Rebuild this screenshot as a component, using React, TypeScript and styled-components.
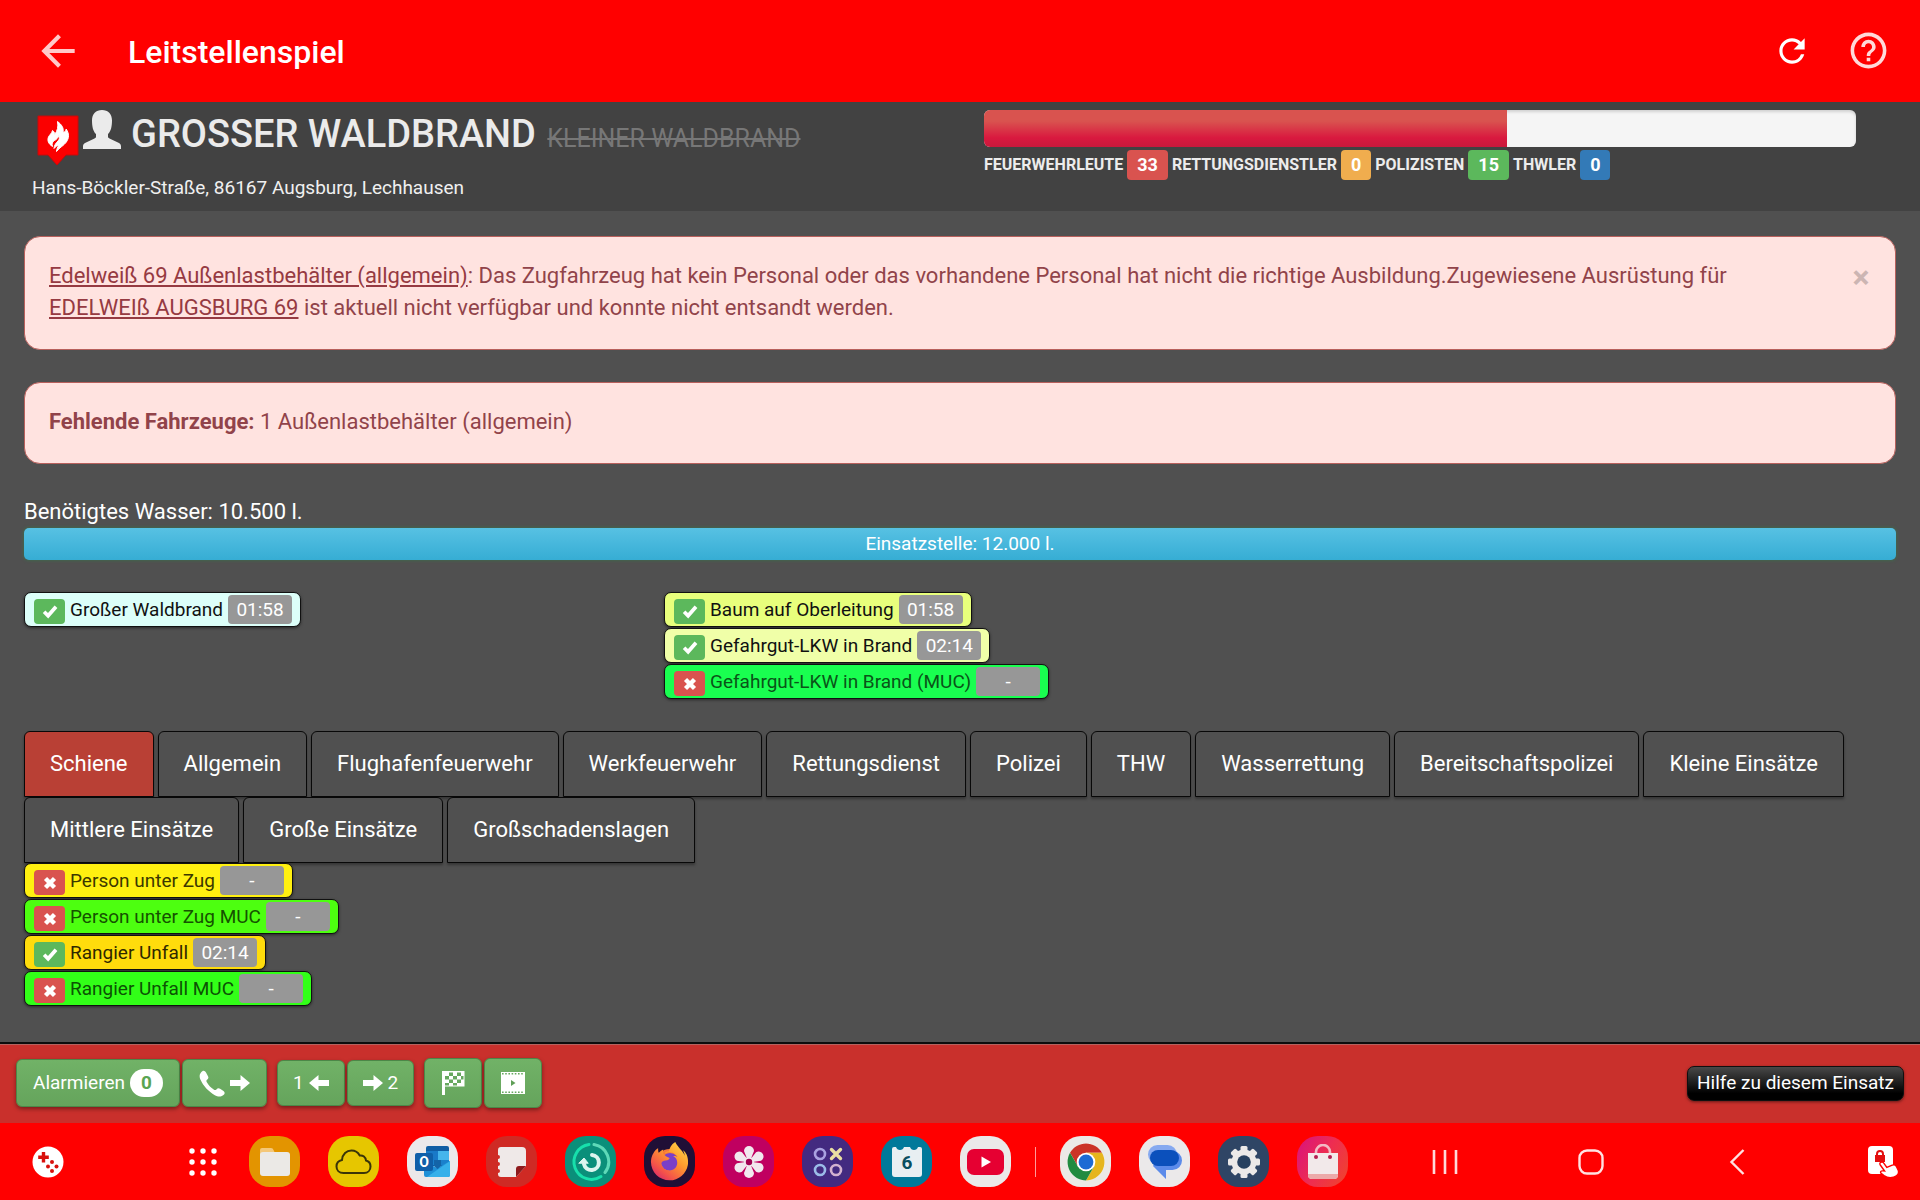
import React, { useState } from "react";
import styled, { createGlobalStyle } from "styled-components";
import { FaFirefoxBrowser } from "react-icons/fa";
import { MdArrowBack, MdHelpOutline, MdRefresh } from "react-icons/md";

const GlobalStyle = createGlobalStyle`
  *, *::before, *::after { box-sizing: border-box; }
  body {
    margin: 0;
    background: #505050;
    color: #fff;
    font-family: Roboto, "Liberation Sans", sans-serif;
    font-size: 22px;
    line-height: 32px;
  }
  button { font-family: inherit; cursor: pointer; }
  svg { display: block; flex: none; }
`;

const Page = styled.div`
  display: flex;
  flex-direction: column;
  min-height: 100vh;
`;

/* ---------- app bar ---------- */

const AppBar = styled.header`
  display: flex;
  align-items: center;
  height: 102px;
  padding: 0 28px 1px 34px;
  background: #ff0000;
`;

const AppTitle = styled.div`
  flex: 1;
  margin-left: 46px;
  padding-top: 3px;
  font-size: 32px;
  font-weight: 500;
  line-height: 40px;
`;

const BarButton = styled.button<{ $color?: string }>`
  display: flex;
  align-items: center;
  justify-content: center;
  width: 48px;
  height: 48px;
  padding: 0;
  border: 0;
  background: none;
  color: ${(p) => p.$color ?? "#fff"};
`;

const BarActions = styled.div`
  display: flex;
  gap: 28px;
`;

/* ---------- mission header ---------- */

const MissionHeader = styled.section`
  display: grid;
  grid-template-columns: 1fr 1fr;
  padding: 8px 0 11px;
  background: #424242;
`;

const MissionInfo = styled.div`
  padding-left: 32px;
`;

const TitleRow = styled.div`
  display: flex;
  align-items: flex-start;
  padding-left: 5px;
`;

const PinIcon = styled.svg`
  margin: 5px 4px 0 0;
`;

const MissionTitle = styled.h1`
  margin: 0 0 0 10px;
  color: #ebebeb;
  font-size: 38px;
  font-weight: 500;
  line-height: 48px;
  text-transform: uppercase;
  white-space: nowrap;
`;

const FormerTitle = styled.s`
  margin-left: 2px;
  color: #777;
  font-size: 25px;
  font-weight: 400;
  line-height: 24px;
`;

const Address = styled.address`
  margin-top: 9px;
  color: #f0f0f0;
  font-size: 19px;
  font-style: normal;
  line-height: 24px;
`;

const MissionStatus = styled.div`
  padding: 0 64px 0 24px;
`;

const Progress = styled.div`
  height: 37px;
  overflow: hidden;
  border-radius: 6px;
  background: #f5f5f5;
  box-shadow: inset 0 2px 3px rgba(0, 0, 0, 0.15);
`;

const ProgressFill = styled.div`
  height: 100%;
  background: linear-gradient(#d9534f 30%, #d9193f 75%, #c9193c);
`;

const CrewList = styled.div`
  display: flex;
  flex-wrap: wrap;
  align-items: center;
  gap: 4px;
  margin-top: 3px;
  font-size: 16px;
  font-weight: 700;
  line-height: 30px;
  color: #ececec;
`;

const CrewBadge = styled.span<{ $bg: string }>`
  padding: 0 10px;
  border-radius: 4px;
  background: ${(p) => p.$bg};
  color: #fff;
  font-size: 18px;
`;

/* ---------- content ---------- */

const Content = styled.main`
  display: flex;
  flex: 1;
  flex-direction: column;
  padding: 25px 24px 32px;
`;

const Alert = styled.div`
  display: flex;
  align-items: flex-start;
  margin-bottom: 32px;
  padding: 23px 24px 25px;
  border: 1px solid #b8605c;
  border-radius: 16px;
  background: #ffe3e0;
  color: #91434a;
`;

const AlertText = styled.p`
  flex: 1;
  margin: 0;
  padding-right: 80px;
`;

const AlertLink = styled.a`
  color: #963a42;
  text-decoration: underline;
`;

const CloseButton = styled.button`
  width: 22px;
  margin-right: -1px;
  padding: 1px 0 0;
  border: 0;
  background: none;
  color: #ccb5b3;
  font-size: 32px;
  font-weight: 700;
  line-height: 32px;
`;

const WaterBar = styled.div`
  height: 32px;
  margin-bottom: 32px;
  border-radius: 5px;
  background: linear-gradient(#57c1e3, #36add4);
  box-shadow: 0 0 3px 1px #41664c;
  font-size: 19px;
  line-height: 31px;
  text-align: center;
`;

const AaoColumns = styled.div`
  display: grid;
  grid-template-columns: repeat(3, 1fr);
  column-gap: 48px;
  margin-bottom: 32px;
`;

const AaoList = styled.div`
  display: flex;
  flex-direction: column;
  align-items: flex-start;
  gap: 1px;
`;

const AaoButton = styled.button<{ $bg: string; $fg: string }>`
  display: flex;
  align-items: center;
  gap: 5px;
  height: 35px;
  padding: 0 8px 0 9px;
  border: 1px solid #111;
  border-radius: 7px;
  background: ${(p) => p.$bg};
  box-shadow: 0 1px 3px rgba(0, 0, 0, 0.5);
  color: ${(p) => p.$fg};
  font-size: 19px;
  line-height: 29px;
  white-space: nowrap;
`;

const StateBadge = styled.span<{ $ok: boolean }>`
  display: flex;
  align-items: center;
  justify-content: center;
  align-self: flex-end;
  width: 31px;
  height: 25px;
  margin-bottom: 2px;
  border-radius: 4px;
  background: ${(p) => (p.$ok ? "#5cb85c" : "#d9534f")};
`;

const TimeBadge = styled.span`
  width: 64px;
  border-radius: 4px;
  background: #979797;
  color: #fff;
  text-align: center;
`;

const Tabs = styled.div`
  display: flex;
  flex-wrap: wrap;
  column-gap: 4px;
`;

const Tab = styled.button<{ $active: boolean }>`
  padding: 16px 25px;
  border: 1px solid #080808;
  border-radius: 6px 6px 0 0;
  background: ${(p) => (p.$active ? "#b94035" : "#505050")};
  box-shadow: 0 2px 3px rgba(0, 0, 0, 0.35);
  color: #fff;
  font-size: 22px;
  line-height: 32px;
`;

/* ---------- action bar ---------- */

const ActionBar = styled.footer`
  display: flex;
  align-items: center;
  justify-content: space-between;
  height: 81px;
  padding: 0 16px 1px;
  border-top: 2px solid #0c0c0c;
  background: #c9302c;
  box-shadow: inset 0 1px 0 #b3635f;
`;

const ActionGroups = styled.div`
  display: flex;
  align-items: center;
  gap: 10px;
`;

const ActionGroup = styled.div`
  display: flex;
  align-items: center;
  gap: 2px;
`;

const buttonHeights = { low: 46, normal: 48, tall: 50 };

const ActionButton = styled.button<{ $size?: keyof typeof buttonHeights }>`
  display: flex;
  align-items: center;
  justify-content: center;
  gap: 5px;
  height: ${(p) => buttonHeights[p.$size ?? "normal"]}px;
  padding: 0 ${(p) => (p.$size === "low" ? 15 : 16)}px;
  border: 1px solid #4c8748;
  border-radius: 6px;
  background: linear-gradient(#71b267, #65a45c);
  box-shadow: 0 2px 4px rgba(0, 0, 0, 0.4);
  color: #fff;
  font-size: 19px;
  line-height: 24px;
`;

const CountBadge = styled.span`
  padding: 0 11px;
  border-radius: 14px;
  background: #fff;
  color: #5aa552;
  font-weight: 700;
  line-height: 28px;
`;

const HelpButton = styled.button`
  padding: 0 9px 1px;
  border: 1px solid #101010;
  border-radius: 7px;
  background: linear-gradient(#484848, #000 80%);
  box-shadow: 0 1px 3px rgba(0, 0, 0, 0.5);
  color: #fff;
  font-size: 19px;
  line-height: 32px;
`;

/* ---------- system task bar ---------- */

const TaskBar = styled.nav`
  display: flex;
  align-items: center;
  justify-content: space-between;
  height: 77px;
  padding: 0 21px 0 32px;
  background: #ff0000;
`;

const AppDock = styled.div`
  display: flex;
  align-items: center;
  gap: 28px;
  margin-left: 32px;
`;

const DockDivider = styled.span`
  width: 1px;
  height: 30px;
  margin: 0 -4px;
  background: #ff9a9a;
`;

const PlainButton = styled.button`
  display: flex;
  align-items: center;
  justify-content: center;
  min-width: 32px;
  padding: 0;
  border: 0;
  background: none;
`;

const DrawerButton = styled(PlainButton)`
  min-width: 51px;
  margin-right: -7px;
`;

const AppIcon = styled.button<{ $bg: string }>`
  display: flex;
  align-items: center;
  justify-content: center;
  width: 51px;
  height: 51px;
  padding: 0;
  border: 0;
  border-radius: 21px;
  background: ${(p) => p.$bg};
`;

const SystemKeys = styled.div`
  display: flex;
  align-items: center;
  gap: 114px;
`;

const FirefoxMark = styled.span`
  display: grid;
  place-items: center;
  > * { grid-area: 1 / 1; }
  .flame { fill: url(#firefoxFlame); }
`;

const ArrowIcon = ({ left = false }: { left?: boolean }) => (
  <svg width="20" height="18" viewBox="0 0 20 18" aria-hidden="true">
    <path
      d={left ? "M0 9 9.500 1v5H20v6H9.500v5z" : "M20 9 10.500 1v5H0v6h10.500v5z"}
      fill="#fff"
    />
  </svg>
);

const CheckIcon = () => (
  <svg width="16" height="14" viewBox="0 0 16 14" aria-hidden="true">
    <path d="M.8 8 3.400 5.400 6 8 12.600.6 15.400 3 6.200 13.400z" fill="#fff" />
  </svg>
);

const CrossIcon = () => (
  <svg width="14" height="14" viewBox="0 0 14 14" aria-hidden="true">
    <path d="m2.500 2.500 9 9M11.500 2.500l-9 9" stroke="#fff" strokeWidth="4.400" />
  </svg>
);

const FlagIcon = () => (
  <svg width="24" height="26" viewBox="0 0 24 26" aria-hidden="true">
    <path d="M1 1h22.500v15.500H4V25H1z" fill="#fff" />
    <path
      d="M8 2.500h4V6H8zM16 2.500h4V6h-4zM4 6h4v3.500H4zM12 6h4v3.500h-4zM20 6h2.500v3.500H20zM8 9.500h4V13H8zM16 9.500h4V13h-4zM4 13h4v2.500H4zM12 13h4v2.500h-4z"
      fill="#67a85f"
    />
  </svg>
);

const FilmIcon = () => (
  <svg width="24" height="22" viewBox="0 0 24 22" aria-hidden="true">
    <path d="M0 0h24v22H0z" fill="#fff" />
    <path d="M1 1.800h22M1 20.200h22" stroke="#67a85f" strokeWidth="1.400" strokeDasharray="1.600 1.600" />
    <path d="m10 8 4.500 3-4.500 3z" fill="#5f9f57" />
  </svg>
);

const PhoneIcon = () => (
  <svg width="26" height="27" viewBox="0 0 26 27" aria-hidden="true">
    <path
      d="M2 2.500C4-.2 5.800.6 7 2.600l2 3.600c.8 1.500.3 2.500-1 3.600-.9.800-.7 1.600 0 2.800 1.600 2.800 4 5.300 6.700 7 1.100.7 1.900.7 2.700-.2 1.100-1.200 2.300-1.500 3.700-.6l3.400 2.200c1.600 1.200 1.600 2.700-.4 4.300-2.500 2-5.600 1.400-8.300-.1C9.600 21.700 4.200 16 1.400 9.600.4 7 .2 4.800 2 2.500z"
      fill="#fff"
    />
  </svg>
);

type Aao = { name: string; time?: string; bg: string; fg?: string };

const AaoItem = ({ name, time, bg, fg = "#111" }: Aao) => (
  <AaoButton type="button" $bg={bg} $fg={fg}>
    <StateBadge $ok={Boolean(time)}>{time ? <CheckIcon /> : <CrossIcon />}</StateBadge>
    <span>{name}</span>
    <TimeBadge>{time ?? "-"}</TimeBadge>
  </AaoButton>
);

const missionAaos: Aao[][] = [
  [{ name: "Großer Waldbrand", time: "01:58", bg: "#dcfff9" }],
  [
    { name: "Baum auf Oberleitung", time: "01:58", bg: "#e8ff7c" },
    { name: "Gefahrgut-LKW in Brand", time: "02:14", bg: "#f0ffa8" },
    { name: "Gefahrgut-LKW in Brand (MUC)", bg: "#19ff50", fg: "#0a5418" },
  ],
];

const railAaos: Aao[] = [
  { name: "Person unter Zug", bg: "#fff010", fg: "#3b3800" },
  { name: "Person unter Zug MUC", bg: "#4dff10", fg: "#155200" },
  { name: "Rangier Unfall", time: "02:14", bg: "#ffdc0c", fg: "#2e2800" },
  { name: "Rangier Unfall MUC", bg: "#32ff18", fg: "#0c5204" },
];

const tabNames = [
  "Schiene",
  "Allgemein",
  "Flughafenfeuerwehr",
  "Werkfeuerwehr",
  "Rettungsdienst",
  "Polizei",
  "THW",
  "Wasserrettung",
  "Bereitschaftspolizei",
  "Kleine Einsätze",
  "Mittlere Einsätze",
  "Große Einsätze",
  "Großschadenslagen",
];

const crew = [
  { label: "FEUERWEHRLEUTE", count: 33, bg: "#d9534f" },
  { label: "RETTUNGSDIENSTLER", count: 0, bg: "#f0ad4e" },
  { label: "POLIZISTEN", count: 15, bg: "#5cb85c" },
  { label: "THWLER", count: 0, bg: "#337ab7" },
];

const Dock = () => (
  <AppDock>
    <DrawerButton aria-label="Alle Apps">
      <svg width="28" height="28" viewBox="0 0 28 28" fill="#fff">
        {[3, 14, 25].map((y) => [3, 14, 25].map((x) => <circle key={`${x}-${y}`} cx={x} cy={y} r="2.700" />))}
      </svg>
    </DrawerButton>
    <AppIcon $bg="#e39400" aria-label="Eigene Dateien">
      <svg width="32" height="30" viewBox="0 0 32 30">
        <path d="M1 3a2 2 0 0 1 2-2h9q2 0 2.500 2L16 6v6H1z" fill="#f4c778" />
        <rect x="1" y="5" width="30" height="24" rx="3" fill="#ebe9e6" />
      </svg>
    </AppIcon>
    <AppIcon $bg="#e6c600" aria-label="Cloud">
      <svg width="37" height="26" viewBox="0 0 37 26">
        <path
          d="M8.500 24C4 24 1.500 21 1.500 17.500c0-3.800 2.600-6 5.500-6.500C7.500 5 11.500 1.500 16.500 1.500c4.200 0 6.600 2 8.200 5 3.200-.5 6 1.500 6.300 5 2.600.6 4.500 2.700 4.500 6 0 3.700-2.500 6.500-6.500 6.500z"
          fill="none"
          stroke="#3a3508"
          strokeWidth="2"
        />
      </svg>
    </AppIcon>
    <AppIcon $bg="#ebe8ea" aria-label="Outlook">
      <svg width="36" height="32" viewBox="0 0 36 32">
        <rect x="11" y="0" width="23" height="20" rx="2" fill="#0f5da4" />
        <path d="M11 5h12v9H11z" fill="#1979c8" />
        <path d="M23 5h11v9H23z" fill="#45b5ec" />
        <path d="M10 14h24v5H10z" fill="#1a80cc" />
        <path d="M9 15 22 22l13-7v14a2 2 0 0 1-2 2H11a2 2 0 0 1-2-2z" fill="#1f90d8" />
        <path d="M35 15v14a2 2 0 0 1-2 2H12z" fill="#36b0ea" />
        <path d="M19 14h7v6l-3.500 3-3.500-3z" fill="#1364a8" />
        <rect x="0" y="7" width="18" height="18" rx="2" fill="#0f5fa9" />
        <text x="9" y="21" fill="#fff" fontFamily="Roboto, sans-serif" fontSize="14" fontWeight="700" textAnchor="middle">O</text>
      </svg>
    </AppIcon>
    <AppIcon $bg="#cf2a24" aria-label="Notes">
      <svg width="30" height="32" viewBox="0 0 30 30">
        <path d="M4 0h21a4 4 0 0 1 4 4v15L19 30H4q-3 0-3-3v-1a2 2 0 0 0 0-4v-3a2 2 0 0 0 0-4v-3a2 2 0 0 0 0-4V3q0-3 3-3z" fill="#efe9e8" />
        <path d="M19 30v-8a3 3 0 0 1 3-3h7z" fill="#8e1a1c" />
      </svg>
    </AppIcon>
    <AppIcon $bg="#0b8f7a" aria-label="Smart Switch">
      <svg width="42" height="42" viewBox="0 0 42 42" fill="none" strokeLinecap="round">
        <path d="M19 3.500A17.500 17.500 0 1 0 31 35.500" stroke="#17e0ac" strokeWidth="3" />
        <path d="M24 3.500a17.500 17.500 0 0 1 11 28" stroke="#5ed9b8" strokeWidth="3" />
        <path d="M22 14a7.500 7.500 0 1 1-8 9" stroke="#dcf5ee" strokeWidth="4" />
        <path d="m9 22 5-5 4 5z" fill="#dcf5ee" stroke="#dcf5ee" strokeWidth="1" />
      </svg>
    </AppIcon>
    <AppIcon $bg="#200f36" aria-label="Firefox">
      <FirefoxMark>
        <svg width="40" height="40" viewBox="0 0 40 40">
          <defs>
            <linearGradient id="firefoxFlame" x1="1" y1="0" x2="0.200" y2="1">
              <stop offset="0" stopColor="#ffe04a" />
              <stop offset=".45" stopColor="#ff9a2e" />
              <stop offset=".8" stopColor="#f4524a" />
              <stop offset="1" stopColor="#d92a6a" />
            </linearGradient>
          </defs>
          <circle cx="20" cy="22" r="15" fill="#f77a35" />
          <circle cx="20" cy="20" r="9" fill="#7a3fc8" />
        </svg>
        <FaFirefoxBrowser className="flame" size={39} />
      </FirefoxMark>
    </AppIcon>
    <AppIcon $bg="#c00060" aria-label="Galerie">
      <svg width="34" height="34" viewBox="-17 -17 34 34" fill="#f1e8ee">
        {[0, 60, 120, 180, 240, 300].map((a) => (
          <path key={a} transform={`rotate(${a})`} d="M-1.800-3-5-11a5 5 0 1 1 10 0L1.800-3z" />
        ))}
        <circle r="5" />
        <circle r="3.200" fill="#a10052" />
      </svg>
    </AppIcon>
    <AppIcon $bg="#432a80" aria-label="Game Launcher">
      <svg width="30" height="30" viewBox="0 0 30 30" fill="none" strokeWidth="2.600">
        <circle cx="7" cy="7" r="5" stroke="#a9a2e0" />
        <circle cx="7" cy="23" r="5" stroke="#9bbce8" />
        <circle cx="23" cy="23" r="5" stroke="#d3b2cf" />
        <path d="m18.500 2.500 9 9M27.500 2.500l-9 9" stroke="#eadfa2" strokeWidth="3.400" strokeLinecap="round" />
      </svg>
    </AppIcon>
    <AppIcon $bg="#00799a" aria-label="Kalender">
      <svg width="30" height="31" viewBox="0 0 30 31">
        <path d="M0 3q0-2 2-2h2q1 3 4 3t4-3h6q1 3 4 3t4-3h2q2 0 2 2v25a3 3 0 0 1-3 3H3a3 3 0 0 1-3-3z" fill="#e8eff2" />
        <text x="15" y="23" fill="#094f60" fontFamily="Roboto, sans-serif" fontSize="19" fontWeight="700" textAnchor="middle">6</text>
      </svg>
    </AppIcon>
    <AppIcon $bg="#ebe9e9" aria-label="YouTube">
      <svg width="37" height="26" viewBox="0 0 37 26">
        <rect width="37" height="26" rx="7" fill="#e60032" />
        <path d="m14.500 7.500 9.500 5.500-9.500 5.500z" fill="#fff" />
      </svg>
    </AppIcon>
    <DockDivider />
    <AppIcon $bg="#ebe9e6" aria-label="Chrome">
      <svg width="38" height="38" viewBox="-19 -19 38 38">
        <circle r="18.500" fill="#fff" />
        <path d="M-16-9.200A18.500 18.500 0 0 1 16-9.200H0L-8 4.600z" fill="#cb3327" />
        <path d="M16-9.200A18.500 18.500 0 0 1 0 18.500L8 4.600 0-9.200z" fill="#e6b51c" />
        <path d="M0 18.500A18.500 18.500 0 0 1-16-9.200L-8 4.600H8z" fill="#218b40" />
        <circle r="9.300" fill="#fff" />
        <circle r="7.400" fill="#1c6bd4" />
      </svg>
    </AppIcon>
    <AppIcon $bg="#ebe9ea" aria-label="Nachrichten">
      <svg width="36" height="36" viewBox="0 0 36 36">
        <rect x="1" y="1" width="29" height="19" rx="9.500" fill="#86a9f0" />
        <path d="M13 7h12.500a9.500 9.500 0 0 1 0 19H19v9l-13-13z" fill="#5c8bea" />
        <rect x="3" y="6" width="29" height="16" rx="8" fill="#0b50bc" />
      </svg>
    </AppIcon>
    <AppIcon $bg="#2f4565" aria-label="Einstellungen">
      <svg width="34" height="34" viewBox="-17 -17 34 34">
        {[0, 45, 90, 135].map((a) => (
          <rect key={a} x="-3.500" y="-16" width="7" height="32" rx="1.500" transform={`rotate(${a})`} fill="#ece9e8" />
        ))}
        <circle r="12.500" fill="#ece9e8" />
        <circle r="6.800" fill="#27405f" />
      </svg>
    </AppIcon>
    <AppIcon $bg="linear-gradient(120deg, #d8127f, #ee2d50 50%, #f0452a)" aria-label="Galaxy Store">
      <svg width="32" height="36" viewBox="0 0 32 36">
        <path d="M9 11V8a7 7 0 0 1 14 0v3" fill="none" stroke="#f3b9c4" strokeWidth="2.600" />
        <path d="M1 9h30v22a4 4 0 0 1-4 4H5a4 4 0 0 1-4-4z" fill="#f2e9ea" />
        <path d="M1 30h30v1a4 4 0 0 1-4 4H5a4 4 0 0 1-4-4z" fill="#eca9a9" />
        <circle cx="9" cy="13" r="2" fill="#b51d50" />
        <circle cx="23" cy="13" r="2" fill="#b51d50" />
      </svg>
    </AppIcon>
  </AppDock>
);

export default function App() {
  const [activeTab, setActiveTab] = useState(0);
  const progress = 60;

  return (
    <Page>
      <GlobalStyle />
      <AppBar>
        <BarButton aria-label="Zurück" $color="#ffc9c9">
          <MdArrowBack size={50} />
        </BarButton>
        <AppTitle>Leitstellenspiel</AppTitle>
        <BarActions>
          <BarButton aria-label="Neu laden">
            <MdRefresh size={38} />
          </BarButton>
          <BarButton aria-label="Hilfe" $color="#ffd9d9">
            <MdHelpOutline size={43} />
          </BarButton>
        </BarActions>
      </AppBar>

      <MissionHeader>
        <MissionInfo>
          <TitleRow>
            <PinIcon width="42" height="52" viewBox="0 0 42 52" aria-hidden="true">
              <path d="M1 1h40v39H29l-9 10-9-10H1z" fill="#fb0000" stroke="#c40a0a" strokeLinejoin="round" />
              <path
                d="M20.500 6.500c4.500 3.500 6.500 6.500 5.500 11 1.800-.3 2.800-1.500 3.200-3.500 3 4.500 3.200 9-.2 13.500-2.200 3-6.500 5-9.500 9 .2-2.500 1-4.300 2.500-6.500-1.500.5-3.500 1.500-5 3.500.2-3 1.500-5 4-7.500 1.500-1.500 1.700-3.500.8-5.500-.8 2.500-2.300 4-4.600 5.200-2 1.300-2.500 3-1.700 5.800C11.500 29 10 25.500 11.500 22c1-2.300 3.300-3.500 4-6.500 1.500 1 2.200 2.200 2.300 4C20.500 15.500 21.500 11.500 20.500 6.500z"
                fill="#fff"
                stroke="#fff"
                strokeLinejoin="round"
              />
            </PinIcon>
            <svg width="38" height="39" viewBox="0 0 38 39" aria-hidden="true">
              <path
                d="M19 0c6 0 10 4 10 10.500 0 5.500-1 11-4 13.500v2.500c0 1 .5 1.500 1.500 2L36 33c1.500.8 2 2 2 3.500V39H0v-2.500C0 35 .5 33.800 2 33l9.500-4.500c1-.5 1.500-1 1.500-2V24c-3-2.500-4-8-4-13.500C9 4 13 0 19 0z"
                fill="#ebebeb"
              />
            </svg>
            <MissionTitle>
              Grosser Waldbrand <FormerTitle>Kleiner Waldbrand</FormerTitle>
            </MissionTitle>
          </TitleRow>
          <Address>Hans-Böckler-Straße, 86167 Augsburg, Lechhausen</Address>
        </MissionInfo>
        <MissionStatus>
          <Progress role="progressbar" aria-valuenow={progress} aria-valuemin={0} aria-valuemax={100}>
            <ProgressFill style={{ width: `${progress}%` }} />
          </Progress>
          <CrewList>
            {crew.map((c) => (
              <React.Fragment key={c.label}>
                <span>{c.label}</span>
                <CrewBadge $bg={c.bg}>{c.count}</CrewBadge>
              </React.Fragment>
            ))}
          </CrewList>
        </MissionStatus>
      </MissionHeader>

      <Content>
        <Alert role="alert">
          <AlertText>
            <AlertLink href="#anhaenger">Edelweiß 69 Außenlastbehälter (allgemein)</AlertLink>: Das Zugfahrzeug hat kein
            Personal oder das vorhandene Personal hat nicht die richtige Ausbildung.Zugewiesene Ausrüstung für{" "}
            <AlertLink href="#fahrzeug">EDELWEIß AUGSBURG 69</AlertLink> ist aktuell nicht verfügbar und konnte nicht
            entsandt werden.
          </AlertText>
          <CloseButton aria-label="Schließen">×</CloseButton>
        </Alert>
        <Alert>
          <AlertText>
            <strong>Fehlende Fahrzeuge:</strong> 1 Außenlastbehälter (allgemein)
          </AlertText>
        </Alert>

        <div>Benötigtes Wasser: 10.500 l.</div>
        <WaterBar>Einsatzstelle: 12.000 l.</WaterBar>

        <AaoColumns>
          {missionAaos.map((list, i) => (
            <AaoList key={i}>
              {list.map((a) => (
                <AaoItem key={a.name} {...a} />
              ))}
            </AaoList>
          ))}
        </AaoColumns>

        <Tabs role="tablist">
          {tabNames.map((name, i) => (
            <Tab key={name} type="button" role="tab" aria-selected={i === activeTab} $active={i === activeTab} onClick={() => setActiveTab(i)}>
              {name}
            </Tab>
          ))}
        </Tabs>
        <AaoList role="tabpanel">
          {railAaos.map((a) => (
            <AaoItem key={a.name} {...a} />
          ))}
        </AaoList>
      </Content>

      <ActionBar>
        <ActionGroups>
          <ActionGroup>
            <ActionButton>
              Alarmieren <CountBadge>0</CountBadge>
            </ActionButton>
            <ActionButton aria-label="Alarmieren und weiter">
              <PhoneIcon />
              <ArrowIcon />
            </ActionButton>
          </ActionGroup>
          <ActionGroup>
            <ActionButton $size="low">
              1 <ArrowIcon left />
            </ActionButton>
            <ActionButton $size="low">
              <ArrowIcon /> 2
            </ActionButton>
          </ActionGroup>
          <ActionGroup>
            <ActionButton $size="tall" aria-label="Einsatz abschließen">
              <FlagIcon />
            </ActionButton>
            <ActionButton $size="tall" aria-label="Wiedergabe">
              <FilmIcon />
            </ActionButton>
          </ActionGroup>
        </ActionGroups>
        <HelpButton>Hilfe zu diesem Einsatz</HelpButton>
      </ActionBar>

      <TaskBar>
        <PlainButton aria-label="Spiele-Werkzeuge">
          <svg width="32" height="32" viewBox="0 0 32 32">
            <circle cx="16" cy="16" r="15.500" fill="#fff" />
            <path d="M11.500 6v10.500M6.200 11.200h10.600" stroke="#d8100c" strokeWidth="3.400" />
            <g fill="#d8100c">
              <circle cx="20" cy="16" r="2" />
              <circle cx="16" cy="20.500" r="2" />
              <circle cx="24.500" cy="20.500" r="2" />
              <circle cx="20" cy="25" r="2" />
            </g>
          </svg>
        </PlainButton>
        <Dock />
        <SystemKeys>
          <PlainButton aria-label="Letzte Apps">
            <svg width="26" height="26" viewBox="0 0 26 26">
              <path d="M2 1v24M13 1v24M24 1v24" stroke="#ffd9d9" strokeWidth="2.600" />
            </svg>
          </PlainButton>
          <PlainButton aria-label="Startseite">
            <svg width="26" height="26" viewBox="0 0 26 26">
              <rect x="1.500" y="1.500" width="23" height="23" rx="7.500" fill="none" stroke="#ffe2e2" strokeWidth="2.400" />
            </svg>
          </PlainButton>
          <PlainButton aria-label="Zurück">
            <svg width="16" height="28" viewBox="0 0 16 28">
              <path d="M14.500 2 2.500 14l12 12" fill="none" stroke="#ffe2e2" strokeWidth="2.400" />
            </svg>
          </PlainButton>
          <PlainButton aria-label="Berührungssperre">
            <svg width="32" height="32" viewBox="0 0 32 32">
              <rect x="1" y="0" width="25" height="28" rx="4" fill="#fff" />
              <path d="M10 10V8a3 3 0 0 1 6 0v2" fill="none" stroke="#e30f0f" strokeWidth="2" />
              <path d="M8 9h10v7H8z" fill="#e30f0f" />
              <path
                d="M13.500 16.500c1.200-1 2.600-.6 3.300.6l3 4.400 5.500-2.300c1.800-.7 3.300-.2 4.200 1.500l1.700 3.600c1.200 3.500-1.200 6-4.600 6.900-3.400 1-6.600.6-9.600-1.600l-3.200-2.500c-.6-1.500.2-2.400 1.800-2.200l2 .1-4.300-6c-.6-.9-.5-1.900.2-2.500z"
                fill="#fff"
                stroke="#f00"
                strokeWidth="1.400"
              />
            </svg>
          </PlainButton>
        </SystemKeys>
      </TaskBar>
    </Page>
  );
}
